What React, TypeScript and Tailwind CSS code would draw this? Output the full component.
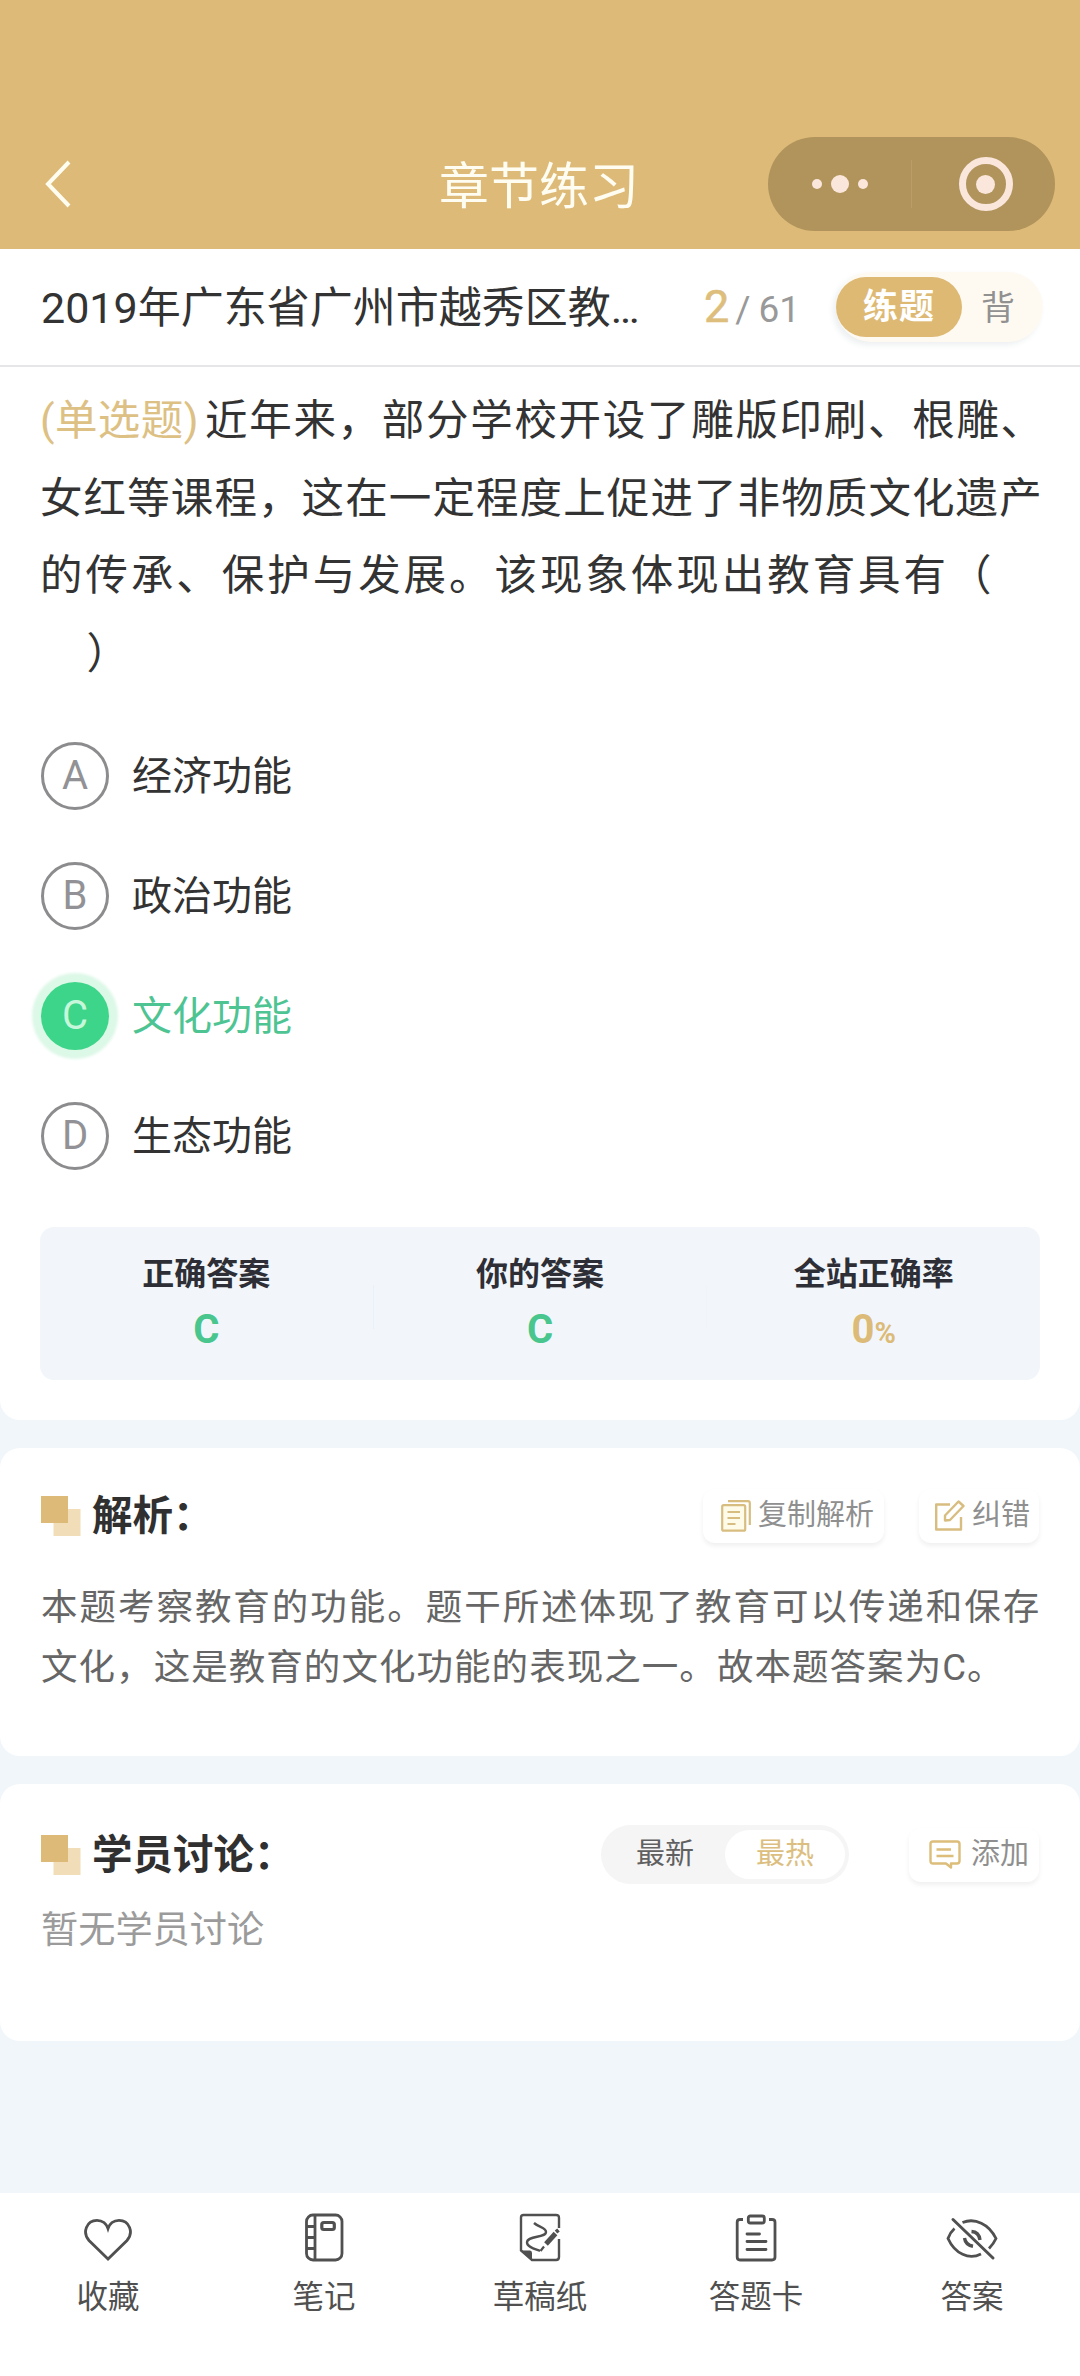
import type { ReactNode } from 'react';

type OptionData = { key: string; text: string; chosen?: boolean };

const options: OptionData[] = [
  { key: 'A', text: '经济功能' },
  { key: 'B', text: '政治功能' },
  { key: 'C', text: '文化功能', chosen: true },
  { key: 'D', text: '生态功能' },
];

function StatusHeader() {
  return (
    <header className="flex h-[249px] items-end bg-[#ddba78] pb-[18px] pr-[25px] pl-[44px]">
      <div className="flex h-[94px] w-full items-center">
        <svg width="30" height="50" viewBox="0 0 30 50" fill="none" stroke="#fffdf0" strokeWidth="4">
          <path d="M25 3 L4 25 L25 47" />
        </svg>
        <h1 className="ml-[365px] pt-[6px] text-[50px] leading-none text-[#fffdf2]">章节练习</h1>
        <div className="ml-auto flex h-[94px] w-[287px] items-center rounded-full bg-[#b0945c]">
          <div className="flex w-[143px] items-center justify-center gap-[9px]">
            <span className="size-[10px] rounded-full bg-[#fbe6dc]" />
            <span className="size-[18px] rounded-full bg-[#fbe6dc]" />
            <span className="size-[10px] rounded-full bg-[#fbe6dc]" />
          </div>
          <div className="h-[48px] w-px bg-[#b99e68]" />
          <div className="flex flex-1 items-center justify-center pl-[4px]">
            <div className="flex size-[54px] items-center justify-center rounded-full border-[7px] border-[#fbe6dc]">
              <span className="size-[19px] rounded-full bg-[#fbe6dc]" />
            </div>
          </div>
        </div>
      </div>
    </header>
  );
}

function PaperBar() {
  return (
    <div className="flex h-[118px] items-center border-b-2 border-[#e6e6e8] bg-white pr-[37px] pl-[41px]">
      <div className="w-[663px] pt-[2px] text-[43px] leading-[60px] text-[#333]">2019年广东省广州市越秀区教…</div>
      <div className="flex w-[132px] items-baseline pt-[2px] leading-[60px]">
        <span className="text-[45px] text-[#ddbe7c] [-webkit-text-stroke:0.6px_#ddbe7c]">2</span>
        <span className="ml-[6px] text-[37px] text-[#999]">/</span>
        <span className="ml-[8px] text-[37px] text-[#999]">61</span>
      </div>
      <div className="flex h-[70px] w-[207px] items-center rounded-full bg-[#fefaf2] shadow-[-3px_3px_6px_#eceff0]">
        <div className="flex h-[60px] w-[126px] items-center justify-center rounded-full bg-[#ddb974] pt-[3px] text-[35px] font-bold tracking-[1px] text-white">
          练题
        </div>
        <div className="ml-[19px] pt-[2px] text-[34px] text-[#919191]">背</div>
      </div>
    </div>
  );
}

function Question() {
  return (
    <div className="h-[361px] pt-[15px] pl-[40px] text-[42.5px] leading-[77.5px] whitespace-pre text-[#333]">
      <div className="flex">
        <span className="w-[165px] tracking-[0.4px] text-[#ddc083]">(单选题)</span>
        <span className="tracking-[1.7px]">近年来，部分学校开设了雕版印刷、根雕、</span>
      </div>
      <div className="tracking-[1.1px]">女红等课程，这在一定程度上促进了非物质文化遗产</div>
      <div className="tracking-[2.95px]">的传承、保护与发展。该现象体现出教育具有（</div>
      <div className="tracking-[4px]">{'\u3000）'}</div>
    </div>
  );
}

function Option({ data }: { data: OptionData }) {
  return (
    <div className="flex h-[120px] items-center pl-[41px]">
      <div
        className={
          data.chosen
            ? 'flex size-[68px] items-center justify-center rounded-full bg-[#3cd589] text-[40px] text-[#c6f7db] shadow-[0_0_3px_9px_#dcf8e7]'
            : 'flex size-[68px] items-center justify-center rounded-full border-[3px] border-[#8c8c8e] text-[40px] text-[#929296]'
        }
      >
        {data.key}
      </div>
      <div
        className={
          data.chosen ? 'ml-[23px] pt-[2px] text-[40px] text-[#4ec493]' : 'ml-[23px] pt-[2px] text-[40px] text-[#333]'
        }
      >
        {data.text}
      </div>
    </div>
  );
}

function Stat({ label, children }: { label: string; children: ReactNode }) {
  return (
    <div className="flex flex-1 flex-col items-center pt-[23px]">
      <div className="text-[32px] leading-[48px] font-bold text-[#2e2f36]">{label}</div>
      <div className="mt-[4px] text-[40px] leading-[56px] font-bold">{children}</div>
    </div>
  );
}

function SectionTitle({ children }: { children: ReactNode }) {
  return (
    <div className="flex items-center">
      <svg width="40" height="40" viewBox="0 0 40 40">
        <rect x="12.500" y="13" width="27" height="27" fill="#f1deb8" />
        <rect x="0" y="0" width="27" height="27" fill="#deba78" />
      </svg>
      <h2 className="ml-[11px] pt-[1px] text-[40.5px] leading-[56px] font-bold text-[#303030]">{children}</h2>
    </div>
  );
}

function CopyIcon() {
  return (
    <svg width="30" height="32" viewBox="0 0 30 32" fill="none" stroke="#d8bd80" strokeWidth="2.200">
      <rect x="1.200" y="5.200" width="23" height="25.500" rx="1.500" fill="#fffbe9" />
      <path d="M7 1.200 H27 Q28.800 1.200 28.800 3 V25" />
      <path d="M6.500 12 H19 M6.500 18 H19 M6.500 24 H14.500" />
    </svg>
  );
}

function EditIcon() {
  return (
    <svg width="30" height="31" viewBox="0 0 30 31" fill="none" stroke="#d8bd80" strokeWidth="2.400" strokeLinejoin="round">
      <path d="M15 4.500 H1.200 V29.500 H26 V17" />
      <path d="M10 20.500 V15.500 L23.500 1.500 L28.500 6 L15 20 Z" />
    </svg>
  );
}

function CommentIcon() {
  return (
    <svg width="32" height="29" viewBox="0 0 32 29" fill="none" stroke="#dcbd7a" strokeWidth="2.400" strokeLinejoin="round">
      <path d="M4 1.500 H28 Q30.500 1.500 30.500 4 V21 Q30.500 23.500 28 23.500 H22 V27.500 L17 23.500 H4 Q1.500 23.500 1.500 21 V4 Q1.500 1.500 4 1.500 Z" />
      <path d="M7.500 9.500 H22 M7.500 16 H24.500" />
    </svg>
  );
}

function ChipButton({ icon, children, className }: { icon: ReactNode; children: ReactNode; className: string }) {
  return (
    <button
      className={`flex h-[54px] items-center rounded-[12px] bg-white text-[29px] text-[#8f8f8f] shadow-[0_3px_5px_#f0f0f0] ${className}`}
    >
      {icon}
      <span>{children}</span>
    </button>
  );
}

const stroke = { fill: 'none', stroke: '#505050', strokeWidth: 2.8 } as const;

function HeartIcon() {
  return (
    <svg width="50" height="50" viewBox="0 0 50 50" {...stroke}>
      <path d="M25 46 L6 27.500 C-1 19.500 3.500 7.300 14 7.300 C19.500 7.300 23.500 11 25 15.500 C26.500 11 30.500 7.300 36 7.300 C46.500 7.300 51 19.500 44 27.500 Z" />
    </svg>
  );
}

function NotebookIcon() {
  return (
    <svg width="50" height="50" viewBox="0 0 50 50" {...stroke}>
      <rect x="7.500" y="2" width="35.500" height="45" rx="6.500" />
      <path d="M16 2 V47 M7.500 13.500 H16 M7.500 24.500 H16 M7.500 35.500 H16" />
      <rect x="22.800" y="9.500" width="12.500" height="7" rx="2" strokeWidth="3.200" />
    </svg>
  );
}

function DraftIcon() {
  return (
    <svg width="50" height="50" viewBox="0 0 50 50" {...stroke} strokeWidth={2.4}>
      <path d="M44 15 V5 Q44 2 41 2 H8.500 Q6 2 6 4.500 V37.500 L17 47 H41 Q44 47 44 44 V26" />
      <path d="M6 37.500 H15 Q17 37.500 17 40 V47 Z" fill="#505050" stroke="none" />
      <path d="M19 10 C24 14.500 31 14.500 31 19 C31 25 12 22.500 12 29.500 C12 34 20 36 25 38" />
      <path d="M31 31 L40.500 20.500" strokeWidth="5" />
      <path d="M41 19 L43.500 17" strokeWidth="4" />
      <path d="M25.500 38 L29 33.500" strokeWidth="2.200" />
    </svg>
  );
}

function ClipboardIcon() {
  return (
    <svg width="50" height="50" viewBox="0 0 50 50" {...stroke}>
      <path d="M12 6.500 H9 Q6.200 6.500 6.200 9.300 V44 Q6.200 47 9 47 H41 Q44 47 44 44 V9.300 Q44 6.500 41 6.500 H38" />
      <rect x="17.300" y="3" width="16" height="7" rx="2" />
      <path d="M16 21 H28.500 M16 28.500 H35 M16 36.500 H35" strokeLinecap="round" />
    </svg>
  );
}

function EyeOffIcon() {
  return (
    <svg width="54" height="50" viewBox="0 0 54 50" {...stroke}>
      <path d="M17.500 9.500 C30 4.500 44 11 51 25.500 Q48.500 31 44 35.500" />
      <path d="M9.500 15.500 Q5 19.500 3 25.500 C10 41 24 47 36 41" />
      <path d="M26.500 18.500 Q34 19 35 27" strokeWidth="3.400" />
      <path d="M19.500 25 Q20.500 32 28 33.300" strokeWidth="3.400" />
      <path d="M8 6.500 L48 45" strokeWidth="3" strokeLinecap="round" />
    </svg>
  );
}

const tabs = [
  { label: '收藏', icon: <HeartIcon /> },
  { label: '笔记', icon: <NotebookIcon /> },
  { label: '草稿纸', icon: <DraftIcon /> },
  { label: '答题卡', icon: <ClipboardIcon /> },
  { label: '答案', icon: <EyeOffIcon /> },
];

export default function App() {
  return (
    <div className="flex h-[2376px] w-[1080px] flex-col overflow-hidden bg-[#f1f6fa] font-[Roboto,'Noto_Sans_CJK_SC',sans-serif]">
      <StatusHeader />
      <PaperBar />

      <main className="flex flex-1 flex-col gap-[28px]">
        <section className="h-[1053px] rounded-b-[20px] bg-white">
          <Question />
          <div className="-mt-[12px]">
            {options.map((option) => (
              <Option key={option.key} data={option} />
            ))}
          </div>
          <div className="mx-[40px] mt-[31px] flex h-[153px] items-start rounded-[14px] bg-[#f2f6fa]">
            <Stat label="正确答案">
              <span className="text-[#48c68d]">C</span>
            </Stat>
            <div className="mt-[58px] h-[44px] w-px bg-[#ebeff7]" />
            <Stat label="你的答案">
              <span className="text-[#48c68d]">C</span>
            </Stat>
            <div className="mt-[58px] h-[44px] w-px bg-[#f0f3f8]" />
            <Stat label="全站正确率">
              <span className="text-[#dcbb78]">
                0<span className="text-[29px]">%</span>
              </span>
            </Stat>
          </div>
        </section>

        <section className="h-[308px] rounded-[20px] bg-white px-[41px] pt-[39px]">
          <div className="flex items-center">
            <SectionTitle>解析：</SectionTitle>
            <ChipButton icon={<CopyIcon />} className="ml-auto w-[181px] gap-[7px] pl-[18px]">
              复制解析
            </ChipButton>
            <ChipButton icon={<EditIcon />} className="ml-[35px] w-[120px] gap-[7px] pl-[16px]">
              纠错
            </ChipButton>
          </div>
          <div className="mt-[34px] text-[36.5px] leading-[60px] whitespace-nowrap text-[#666]">
            <div className="tracking-[1.97px]">本题考察教育的功能。题干所述体现了教育可以传递和保存</div>
            <div className="tracking-[1.05px]">文化，这是教育的文化功能的表现之一。故本题答案为C。</div>
          </div>
        </section>

        <section className="h-[257px] rounded-[20px] bg-white px-[41px] pt-[41px]">
          <div className="flex items-center">
            <SectionTitle>学员讨论：</SectionTitle>
            <div className="ml-auto flex h-[59px] w-[248px] items-center rounded-full bg-[#f5f5f6] pr-[4px] text-[29px]">
              <div className="flex-1 pl-[4px] text-center text-[#606060]">最新</div>
              <div className="flex h-[49px] w-[120px] items-center justify-center rounded-full bg-white text-[#dcbe80]">
                最热
              </div>
            </div>
            <ChipButton icon={<CommentIcon />} className="ml-[60px] w-[130px] gap-[10px] pl-[20px]">
              添加
            </ChipButton>
          </div>
          <div className="mt-[16px] text-[37.2px] leading-[60px] text-[#9b9b9b]">暂无学员讨论</div>
        </section>
      </main>

      <nav className="flex h-[183px] bg-white pt-[20px]">
        {tabs.map((tab) => (
          <div key={tab.label} className="flex flex-1 flex-col items-center">
            {tab.icon}
            <div className="mt-[11px] text-[31.500px] leading-[48px] text-[#505050]">{tab.label}</div>
          </div>
        ))}
      </nav>
    </div>
  );
}
